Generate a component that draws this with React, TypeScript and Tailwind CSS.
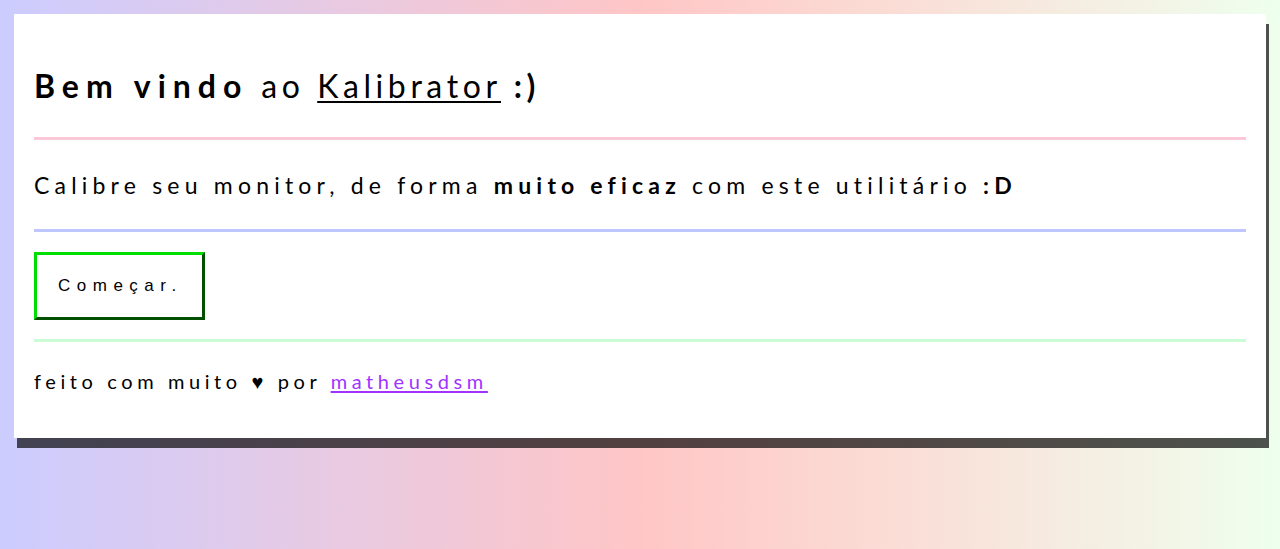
export default function App() {
  return (
    <div className="min-h-screen w-full bg-gradient-to-r from-[#ccccff] via-[#ffc6c6] to-[#eeffee] p-[14px] font-['Lato',_'Open_Sans',_sans-serif] text-black">
      {/* Card */}
      <div className="bg-white px-5 pt-[54px] pb-[44px] shadow-[3px_10px_0_rgba(0,0,0,0.68)]">
        <h1 className="h-9 whitespace-nowrap text-[32px] leading-9 tracking-[4.6px]">
          <b className="font-bold tracking-[7px]">Bem vindo</b> ao{' '}
          <a href="#" className="underline decoration-[1.5px] underline-offset-[3px]">Kalibrator</a>{' '}
          <b className="font-bold">:)</b>
        </h1>

        <div className="mt-[33px] h-[3px] bg-[#fac8d6]" />

        <p className="mt-[31px] h-7 whitespace-nowrap text-[23px] leading-7 tracking-[5.2px]">
          Calibre seu monitor, de forma <b className="font-bold">muito eficaz</b> com este utilitário{' '}
          <b className="font-bold">:D</b>
        </p>

        <div className="mt-[30px] h-[3px] bg-[#bfc7ff]" />

        <button className="mt-5 flex h-[68px] w-[171px] items-center border-[3px] border-solid border-t-[#00dd00] border-l-[#00dd00] border-r-[#005000] border-b-[#005000] bg-white pl-[21px] font-['Liberation_Sans',_Arial,_sans-serif] text-[17px] tracking-[6.5px]">
          Começar.
        </button>

        <div className="mt-[19px] h-[3px] bg-[#ccfcd6]" />

        <p className="mt-[26px] h-[26px] whitespace-nowrap text-[20px] leading-[26px] tracking-[4.6px]">
          feito com muito ♥ por{' '}
          <a href="#" className="text-[#a033ff] underline decoration-[#a033ff] underline-offset-[2px]">matheusdsm</a>
        </p>
      </div>
    </div>
  );
}
